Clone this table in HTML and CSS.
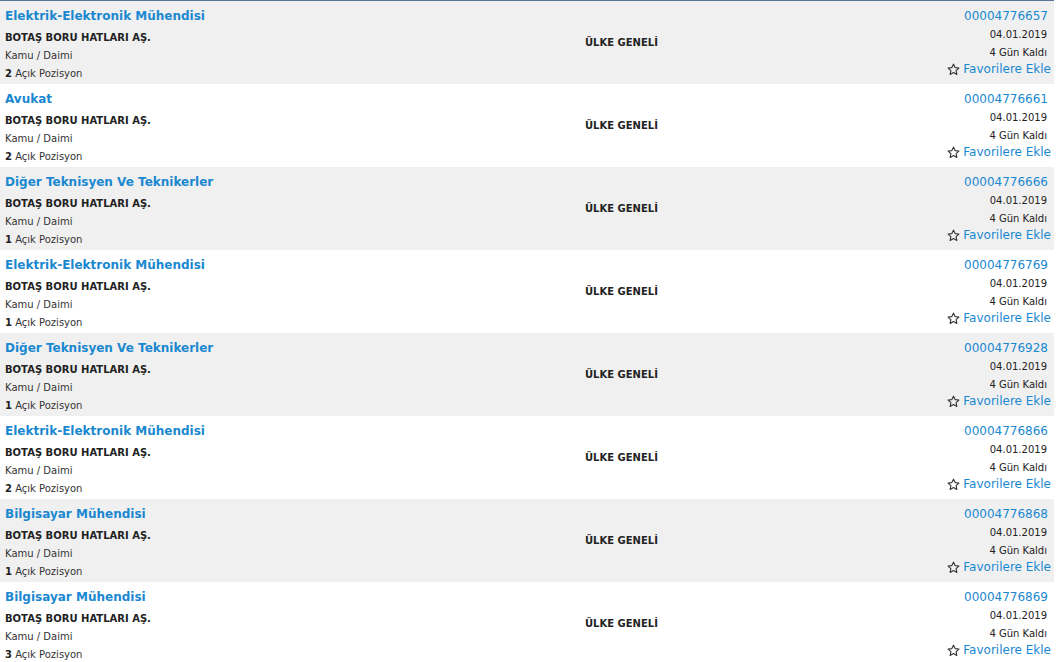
FILE: index.html
```html
<!DOCTYPE html>
<html lang="tr">
<head>
<meta charset="utf-8">
<link rel="stylesheet" href="styles.css">
</head>
<body>
<div class="list">
  <div class="row alt">
    <div class="left">
      <a class="title">Elektrik-Elektronik Mühendisi</a>
      <div class="company">BOTAŞ BORU HATLARI AŞ.</div>
      <div class="meta">Kamu / Daimi</div>
      <div class="meta"><b>2</b> Açık Pozisyon</div>
    </div>
    <div class="mid">ÜLKE GENELİ</div>
    <div class="right">
      <a class="num">00004776657</a>
      <div class="small">04.01.2019</div>
      <div class="small">4 Gün Kaldı</div>
      <a class="fav"><svg class="star" viewBox="0 0 14 14"><path d="M7 1.2l1.75 3.75 4.05.5-3 2.8.8 4.05L7 10.3l-3.6 2 .8-4.05-3-2.8 4.05-.5z"/></svg>Favorilere Ekle</a>
    </div>
  </div>
  <div class="row">
    <div class="left">
      <a class="title">Avukat</a>
      <div class="company">BOTAŞ BORU HATLARI AŞ.</div>
      <div class="meta">Kamu / Daimi</div>
      <div class="meta"><b>2</b> Açık Pozisyon</div>
    </div>
    <div class="mid">ÜLKE GENELİ</div>
    <div class="right">
      <a class="num">00004776661</a>
      <div class="small">04.01.2019</div>
      <div class="small">4 Gün Kaldı</div>
      <a class="fav"><svg class="star" viewBox="0 0 14 14"><path d="M7 1.2l1.75 3.75 4.05.5-3 2.8.8 4.05L7 10.3l-3.6 2 .8-4.05-3-2.8 4.05-.5z"/></svg>Favorilere Ekle</a>
    </div>
  </div>
  <div class="row alt">
    <div class="left">
      <a class="title">Diğer Teknisyen Ve Teknikerler</a>
      <div class="company">BOTAŞ BORU HATLARI AŞ.</div>
      <div class="meta">Kamu / Daimi</div>
      <div class="meta"><b>1</b> Açık Pozisyon</div>
    </div>
    <div class="mid">ÜLKE GENELİ</div>
    <div class="right">
      <a class="num">00004776666</a>
      <div class="small">04.01.2019</div>
      <div class="small">4 Gün Kaldı</div>
      <a class="fav"><svg class="star" viewBox="0 0 14 14"><path d="M7 1.2l1.75 3.75 4.05.5-3 2.8.8 4.05L7 10.3l-3.6 2 .8-4.05-3-2.8 4.05-.5z"/></svg>Favorilere Ekle</a>
    </div>
  </div>
  <div class="row">
    <div class="left">
      <a class="title">Elektrik-Elektronik Mühendisi</a>
      <div class="company">BOTAŞ BORU HATLARI AŞ.</div>
      <div class="meta">Kamu / Daimi</div>
      <div class="meta"><b>1</b> Açık Pozisyon</div>
    </div>
    <div class="mid">ÜLKE GENELİ</div>
    <div class="right">
      <a class="num">00004776769</a>
      <div class="small">04.01.2019</div>
      <div class="small">4 Gün Kaldı</div>
      <a class="fav"><svg class="star" viewBox="0 0 14 14"><path d="M7 1.2l1.75 3.75 4.05.5-3 2.8.8 4.05L7 10.3l-3.6 2 .8-4.05-3-2.8 4.05-.5z"/></svg>Favorilere Ekle</a>
    </div>
  </div>
  <div class="row alt">
    <div class="left">
      <a class="title">Diğer Teknisyen Ve Teknikerler</a>
      <div class="company">BOTAŞ BORU HATLARI AŞ.</div>
      <div class="meta">Kamu / Daimi</div>
      <div class="meta"><b>1</b> Açık Pozisyon</div>
    </div>
    <div class="mid">ÜLKE GENELİ</div>
    <div class="right">
      <a class="num">00004776928</a>
      <div class="small">04.01.2019</div>
      <div class="small">4 Gün Kaldı</div>
      <a class="fav"><svg class="star" viewBox="0 0 14 14"><path d="M7 1.2l1.75 3.75 4.05.5-3 2.8.8 4.05L7 10.3l-3.6 2 .8-4.05-3-2.8 4.05-.5z"/></svg>Favorilere Ekle</a>
    </div>
  </div>
  <div class="row">
    <div class="left">
      <a class="title">Elektrik-Elektronik Mühendisi</a>
      <div class="company">BOTAŞ BORU HATLARI AŞ.</div>
      <div class="meta">Kamu / Daimi</div>
      <div class="meta"><b>2</b> Açık Pozisyon</div>
    </div>
    <div class="mid">ÜLKE GENELİ</div>
    <div class="right">
      <a class="num">00004776866</a>
      <div class="small">04.01.2019</div>
      <div class="small">4 Gün Kaldı</div>
      <a class="fav"><svg class="star" viewBox="0 0 14 14"><path d="M7 1.2l1.75 3.75 4.05.5-3 2.8.8 4.05L7 10.3l-3.6 2 .8-4.05-3-2.8 4.05-.5z"/></svg>Favorilere Ekle</a>
    </div>
  </div>
  <div class="row alt">
    <div class="left">
      <a class="title">Bilgisayar Mühendisi</a>
      <div class="company">BOTAŞ BORU HATLARI AŞ.</div>
      <div class="meta">Kamu / Daimi</div>
      <div class="meta"><b>1</b> Açık Pozisyon</div>
    </div>
    <div class="mid">ÜLKE GENELİ</div>
    <div class="right">
      <a class="num">00004776868</a>
      <div class="small">04.01.2019</div>
      <div class="small">4 Gün Kaldı</div>
      <a class="fav"><svg class="star" viewBox="0 0 14 14"><path d="M7 1.2l1.75 3.75 4.05.5-3 2.8.8 4.05L7 10.3l-3.6 2 .8-4.05-3-2.8 4.05-.5z"/></svg>Favorilere Ekle</a>
    </div>
  </div>
  <div class="row">
    <div class="left">
      <a class="title">Bilgisayar Mühendisi</a>
      <div class="company">BOTAŞ BORU HATLARI AŞ.</div>
      <div class="meta">Kamu / Daimi</div>
      <div class="meta"><b>3</b> Açık Pozisyon</div>
    </div>
    <div class="mid">ÜLKE GENELİ</div>
    <div class="right">
      <a class="num">00004776869</a>
      <div class="small">04.01.2019</div>
      <div class="small">4 Gün Kaldı</div>
      <a class="fav"><svg class="star" viewBox="0 0 14 14"><path d="M7 1.2l1.75 3.75 4.05.5-3 2.8.8 4.05L7 10.3l-3.6 2 .8-4.05-3-2.8 4.05-.5z"/></svg>Favorilere Ekle</a>
    </div>
  </div>
</div>
</body>
</html>
```
FILE: styles.css
```css
html, body {
  margin: 0;
  padding: 0;
  background: #ffffff;
}
body {
  font-family: "DejaVu Sans", Verdana, sans-serif;
  color: #333333;
}
.list {
  width: 1054px;
  border-top: 1px solid #5a7697;
}
.row {
  display: grid;
  grid-template-columns: 580px 1fr auto;
  height: 83px;
  box-sizing: border-box;
  background: #ffffff;
}
.row.alt {
  background: #f0f0f0;
}
.left {
  padding: 6px 0 0 5px;
  display: flex;
  flex-direction: column;
}
.title {
  color: #1a88d0;
  font-weight: bold;
  font-size: 12px;
  line-height: 18px;
  height: 22px;
}
.company {
  font-weight: bold;
  font-size: 10px;
  line-height: 18px;
  color: #222;
}
.meta {
  font-size: 10px;
  line-height: 18px;
  color: #333;
}
.meta b {
  color: #222;
}
.mid {
  padding-left: 5px;
  display: flex;
  align-items: center;
  font-weight: bold;
  font-size: 10px;
  color: #222;
}
.right {
  padding: 6px 3px 0 0;
  display: flex;
  flex-direction: column;
  align-items: flex-end;
}
.num {
  color: #1a88d0;
  font-size: 12px;
  line-height: 19px;
  margin-right: 3px;
}
.small {
  font-size: 10px;
  line-height: 18px;
  color: #222;
  margin-right: 4px;
}
.fav {
  color: #1a88d0;
  font-size: 12px;
  line-height: 15px;
  display: flex;
  align-items: center;
}
.star {
  width: 13px;
  height: 13px;
  margin-right: 3px;
  fill: none;
  stroke: #333;
  stroke-width: 1.2;
  stroke-linejoin: round;
}
```
